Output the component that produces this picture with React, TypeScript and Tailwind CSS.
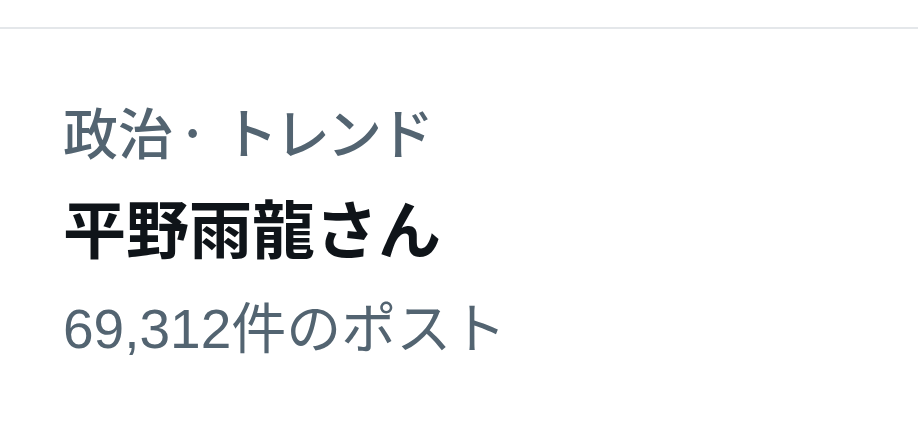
const font = {
  fontFamily: '"Liberation Sans", "Noto Sans CJK JP", sans-serif',
};

export default function App() {
  return (
    <div className="w-[918px] h-[431px] bg-white overflow-hidden" style={font}>
      <div className="h-[27px]" />
      <div className="h-[2px] bg-[#e4e7ea]" />
      <div className="flex flex-col pl-[63px] pt-[55px]">
        <div className="h-[98px] pb-[5px] flex items-center text-[55px] font-medium text-[#536471] [font-family:'Noto_Sans_CJK_JP',sans-serif]">
          <span>政治</span>
          <span className="inline-block w-[50px] pl-[4px]">·</span>
          <span className="tracking-[-3px]">トレンド</span>
        </div>
        <div className="h-[98px] flex items-center text-[63px] font-bold text-[#0f1419]">
          平野雨龍さん
        </div>
        <div className="h-[98px] flex items-center text-[55px] text-[#536471]">
          69,312件のポスト
        </div>
      </div>
    </div>
  );
}
